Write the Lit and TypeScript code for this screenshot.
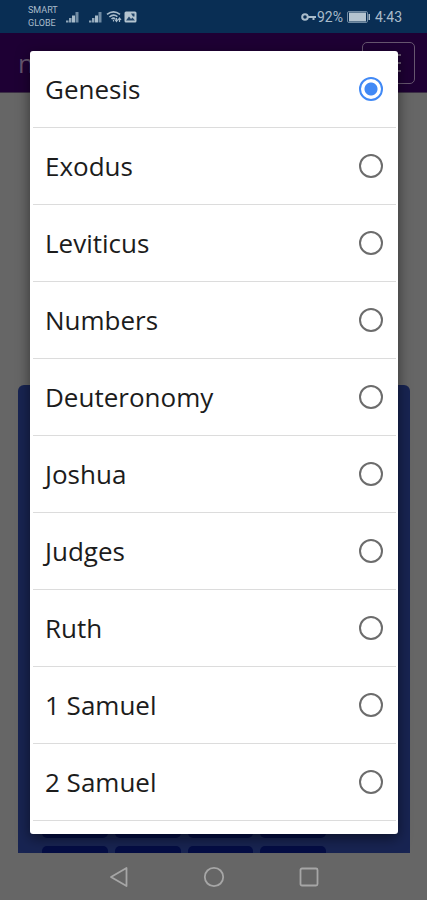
import { LitElement, html, css, svg } from "lit";
import { customElement, state } from "lit/decorators.js";

const BOOKS = [
  "Genesis",
  "Exodus",
  "Leviticus",
  "Numbers",
  "Deuteronomy",
  "Joshua",
  "Judges",
  "Ruth",
  "1 Samuel",
  "2 Samuel",
];

const signal = svg`
  <path d="M0 10.500h2.500v2h-2.500z M3 8h2.500v4.500h-2.500z" fill="#8fa5b8"/>
  <path d="M6 5.500h3v7h-3z" fill="#a9bccb"/>
  <path d="M9.500 2h3v10.500h-3z" fill="#6f8aa3"/>`;

@customElement("status-bar")
export class StatusBar extends LitElement {
  static styles = css`
    :host {
      display: flex;
      align-items: center;
      height: 33px;
      padding: 0 25px 0 28px;
      background: #092e54;
      color: #a9bccb;
      font-family: Roboto, sans-serif;
      box-sizing: border-box;
    }
    .carriers {
      width: 32px;
      margin-right: 6px;
      font-size: 9px;
      line-height: 13px;
      color: #a9bccb;
    }
    svg {
      display: block;
    }
    .second {
      margin-left: 10px;
    }
    .wifi {
      margin-left: 4px;
    }
    .photo {
      margin-left: 2px;
    }
    .right {
      display: flex;
      align-items: center;
      margin-left: auto;
      font-size: 14px;
      line-height: 16px;
    }
    .key {
      margin-right: 1px;
    }
    .battery {
      margin: 0 4px;
    }
  `;

  render() {
    return html`
      <div class="carriers">SMART<br />GLOBE</div>
      <svg width="13" height="13" viewBox="0 0 13 13">${signal}</svg>
      <svg class="second" width="13" height="13" viewBox="0 0 13 13">${signal}</svg>
      <svg class="wifi" width="16" height="13" viewBox="0 0 16 13" fill="none" stroke="#a9bccb" stroke-width="1.6">
        <path d="M1 4.4Q7.500 -0.600 14 4.400M3.400 7Q7.500 3.400 11.400 6.600M5.500 9Q7.500 7.400 9.200 9" />
        <path d="M7.500 9.800v1.600M10.500 8v3.500M9 9.500l1.500 2 1.500-2M13.500 12v-3.500M12 10l1.500-2 1.500 2" stroke-width="1.200" />
      </svg>
      <svg class="photo" width="13" height="12" viewBox="0 0 13 12">
        <rect x="0.500" y="0.500" width="12" height="11" rx="1.500" fill="#b4c4d0" />
        <path d="M2 9.500l3-4 2 2.500 1.500-1.500 2.500 3z" fill="#23466a" />
        <path d="M7 2.500h3.500v3h-1.500z" fill="#23466a" />
      </svg>
      <div class="right">
        <svg class="key" width="15" height="10" viewBox="0 0 15 10" fill="none" stroke="#a9bccb" stroke-width="2">
          <circle cx="4" cy="5" r="2.800" />
          <path d="M7 5h8M12.500 5v3" />
        </svg>
        <span>92%</span>
        <svg class="battery" width="24" height="12" viewBox="0 0 24 12">
          <rect x="0.500" y="0.500" width="20" height="11" rx="1.500" fill="none" stroke="#6f8aa3" />
          <rect x="2" y="1.500" width="17" height="9" fill="#b4c4d0" />
          <path d="M21.500 3h1.500v6h-1.500z" fill="#a9bccb" />
        </svg>
        <span>4:43</span>
      </div>
    `;
  }
}

@customElement("nav-bar")
export class NavBar extends LitElement {
  static styles = css`
    :host {
      display: flex;
      justify-content: center;
      align-items: center;
      gap: 71px;
      height: 47px;
      background: #666;
    }
    button {
      display: block;
      width: 24px;
      height: 24px;
      padding: 0;
      border: 0;
      background: none;
    }
    svg {
      display: block;
      fill: none;
      stroke: #a6a6a6;
      stroke-width: 1.8;
      stroke-linejoin: round;
    }
  `;

  render() {
    return html`
      <button aria-label="Back">
        <svg width="24" height="24" viewBox="0 0 24 24"><path d="M4 12L19.500 3v18z" /></svg>
      </button>
      <button aria-label="Home">
        <svg width="24" height="24" viewBox="0 0 24 24"><circle cx="12" cy="12" r="9.200" /></svg>
      </button>
      <button aria-label="Recent apps">
        <svg width="24" height="24" viewBox="0 0 24 24"><rect x="3.500" y="3.500" width="17" height="17" rx="1.500" /></svg>
      </button>
    `;
  }
}

@customElement("book-picker")
export class BookPicker extends LitElement {
  static styles = css`
    :host {
      display: block;
      flex: 1;
      background: #fff;
      border-radius: 3px;
      box-shadow: 0 4px 14px rgba(0, 0, 0, 0.5);
      overflow: hidden;
    }
    .row {
      display: flex;
      align-items: center;
      justify-content: space-between;
      height: 77px;
      margin: 0 2px 0 3px;
      padding: 0 13px 0 12px;
      box-sizing: border-box;
      border-bottom: 1px solid #dcdcdc;
      color: #1c1c1c;
      font: 26px/36px "Open Sans", "Noto Sans", sans-serif;
    }
    input {
      appearance: none;
      flex: none;
      width: 24px;
      height: 24px;
      margin: 0;
      border: 2px solid #6c6c6c;
      border-radius: 50%;
      background: #fff;
    }
    input:checked {
      border-color: #4189f5;
      background: radial-gradient(circle, #4189f5 6px, #fff 7px);
    }
  `;

  @state() selected = BOOKS[0];

  render() {
    return BOOKS.map(
      (book) => html`
        <label class="row">
          <span>${book}</span>
          <input
            type="radio"
            name="book"
            .value=${book}
            .checked=${book === this.selected}
            @change=${() => (this.selected = book)}
          />
        </label>
      `
    );
  }
}

@customElement("app-root")
export class AppRoot extends LitElement {
  static styles = css`
    :host {
      display: flex;
      flex-direction: column;
      position: relative;
      min-height: 100vh;
      background: #666;
      font-family: "Open Sans", "Noto Sans", sans-serif;
    }
    header {
      display: flex;
      align-items: center;
      justify-content: space-between;
      height: 60px;
      padding: 0 12px 0 18px;
      box-sizing: border-box;
      background: #1e0034;
      color: #66566f;
      font-size: 26px;
      line-height: 36px;
      border-bottom: 1px solid #3b2e45;
    }
    .menu {
      width: 53px;
      height: 42px;
      padding: 0 12px;
      border: 1px solid #66566f;
      border-radius: 5px;
      background: none;
    }
    .menu svg {
      display: block;
    }
    main {
      display: flex;
      flex: 1;
      padding: 292px 17px 0 18px;
    }
    .card {
      display: flex;
      align-items: flex-end;
      flex: 1;
      padding: 0 84px 0 24px;
      border-radius: 6px 6px 0 0;
      background: #182452;
    }
    .keys {
      display: grid;
      grid-template-columns: repeat(4, 1fr);
      gap: 8px 7px;
      flex: 1;
    }
    .key {
      height: 7px;
      border-radius: 5px 5px 0 0;
      background: #040d44;
    }
    .key.upper {
      border-radius: 0 0 5px 5px;
    }
    .overlay {
      display: flex;
      position: absolute;
      inset: 0;
      padding: 51px 29px 66px 30px;
    }
  `;

  render() {
    return html`
      <status-bar></status-bar>
      <header>
        <span>n</span>
        <button class="menu" aria-label="Menu">
          <svg width="26" height="20" viewBox="0 0 26 20" stroke="#66566f" stroke-width="2">
            <path d="M0 2h26M0 10h26M0 18h26" />
          </svg>
        </button>
      </header>
      <main>
        <section class="card">
          <div class="keys">
            ${[0, 1, 2, 3].map(() => html`<div class="key upper"></div>`)}
            ${[0, 1, 2, 3].map(() => html`<div class="key"></div>`)}
          </div>
        </section>
      </main>
      <nav-bar></nav-bar>
      <div class="overlay"><book-picker role="dialog" aria-label="Book"></book-picker></div>
    `;
  }
}
